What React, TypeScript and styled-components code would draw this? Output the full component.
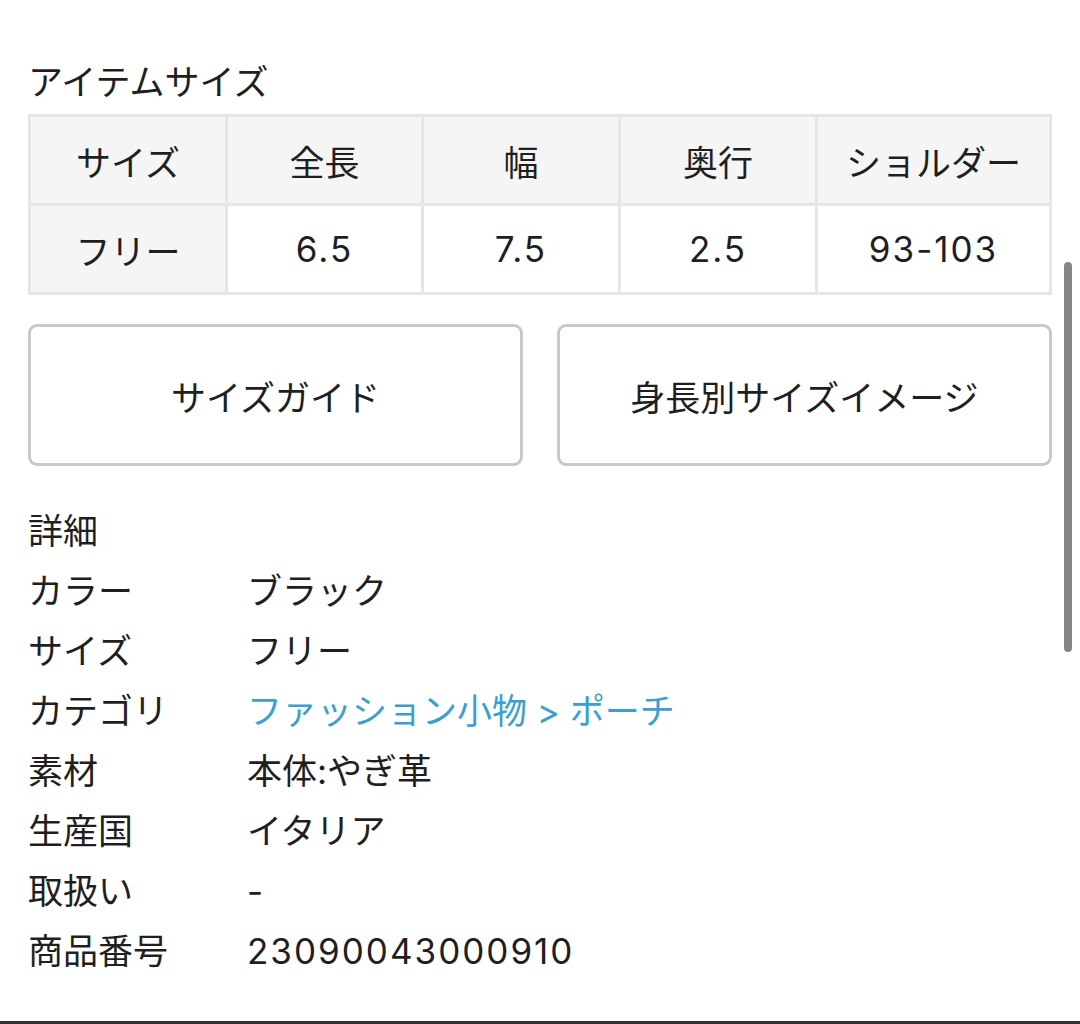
import React from "react";
import styled, { createGlobalStyle } from "styled-components";

const GlobalStyle = createGlobalStyle`
	html, body {
		margin: 0;
		padding: 0;
		background: #fff;
	}
	body {
		font-family: Inter, "Noto Sans CJK JP", sans-serif;
		color: #1f1f1f;
	}
`;

type Detail = { label: string; value: string; link?: boolean; numeric?: boolean };

const headers = ["サイズ", "全長", "幅", "奥行", "ショルダー"];
const sizes = ["フリー", "6.5", "7.5", "2.5", "93-103"];
const colWidths = [197, 196, 197, 197, 234];

const details: Detail[] = [
	{ label: "カラー", value: "ブラック" },
	{ label: "サイズ", value: "フリー" },
	{ label: "カテゴリ", value: "ファッション小物 > ポーチ", link: true },
	{ label: "素材", value: "本体:やぎ革" },
	{ label: "生産国", value: "イタリア" },
	{ label: "取扱い", value: "-" },
	{ label: "商品番号", value: "23090043000910", numeric: true },
];

const App: React.FC = () => {
	return (
		<Page>
			<GlobalStyle />
			<Content>
				<SectionTitle>アイテムサイズ</SectionTitle>
				<SizeTable>
					<colgroup>
						{colWidths.map((w, i) => (
							<col key={i} style={{ width: w }} />
						))}
					</colgroup>
					<tbody>
						<tr>
							{headers.map((h) => (
								<Cell key={h} $shaded>
									{h}
								</Cell>
							))}
						</tr>
						<tr>
							{sizes.map((s, i) => (
								<Cell key={s} $shaded={i === 0} $numeric={i > 0}>
									{s}
								</Cell>
							))}
						</tr>
					</tbody>
				</SizeTable>
				<ButtonRow>
					<GuideButton>サイズガイド</GuideButton>
					<GuideButton>身長別サイズイメージ</GuideButton>
				</ButtonRow>
				<DetailTitle>詳細</DetailTitle>
				<DetailList>
					{details.map(({ label, value, link, numeric }) => (
						<React.Fragment key={label}>
							<DetailLabel>{label}</DetailLabel>
							<DetailValue $link={link} $numeric={numeric}>
								{value}
							</DetailValue>
						</React.Fragment>
					))}
				</DetailList>
			</Content>
			<BottomBar />
			<ScrollThumb />
		</Page>
	);
};

export default App;

const Page = styled.div`
	position: relative;
	min-height: 1024px;
	display: flex;
	flex-direction: column;
	overflow: hidden;
`;

const Content = styled.div`
	padding: 58px 28px 0;
	flex: 1;
`;

const SectionTitle = styled.h2`
	margin: 0 0 8px;
	font-size: 35px;
	font-weight: 400;
	line-height: 48px;
`;

const SizeTable = styled.table`
	width: 1021px;
	table-layout: fixed;
	border-collapse: collapse;
	border: 3px solid #e6e6e6;
`;

const Cell = styled.td<{ $shaded?: boolean; $numeric?: boolean }>`
	height: 86px;
	padding: 0;
	border: 3px solid #e6e6e6;
	background: ${(p) => (p.$shaded ? "#f5f5f5" : "#fff")};
	text-align: center;
	vertical-align: middle;
	font-size: 35px;
	letter-spacing: ${(p) => (p.$numeric ? "2px" : "0")};
	color: #1f1f1f;
`;

const ButtonRow = styled.div`
	display: grid;
	grid-template-columns: 1fr 1fr;
	gap: 34px;
	margin-top: 29px;
`;

const GuideButton = styled.button`
	height: 142px;
	border: 3px solid #c8c8c8;
	border-radius: 9px;
	background: #fff;
	font-family: inherit;
	font-size: 35px;
	color: #1f1f1f;
	cursor: pointer;
`;

const DetailTitle = styled.div`
	margin-top: 35px;
	font-size: 35px;
	line-height: 60px;
`;

const DetailList = styled.div`
	display: grid;
	grid-template-columns: 219px 1fr;
	font-size: 35px;
	line-height: 60px;
`;

const DetailLabel = styled.div``;

const DetailValue = styled.div<{ $link?: boolean; $numeric?: boolean }>`
	color: ${(p) => (p.$link ? "#3b9fcf" : "#1f1f1f")};
	letter-spacing: ${(p) => (p.$numeric ? "2px" : "0")};
`;

const BottomBar = styled.div`
	height: 3px;
	background: #333;
`;

const ScrollThumb = styled.div`
	position: absolute;
	top: 262px;
	right: 8px;
	width: 8px;
	height: 390px;
	border-radius: 4px;
	background: #858585;
`;
